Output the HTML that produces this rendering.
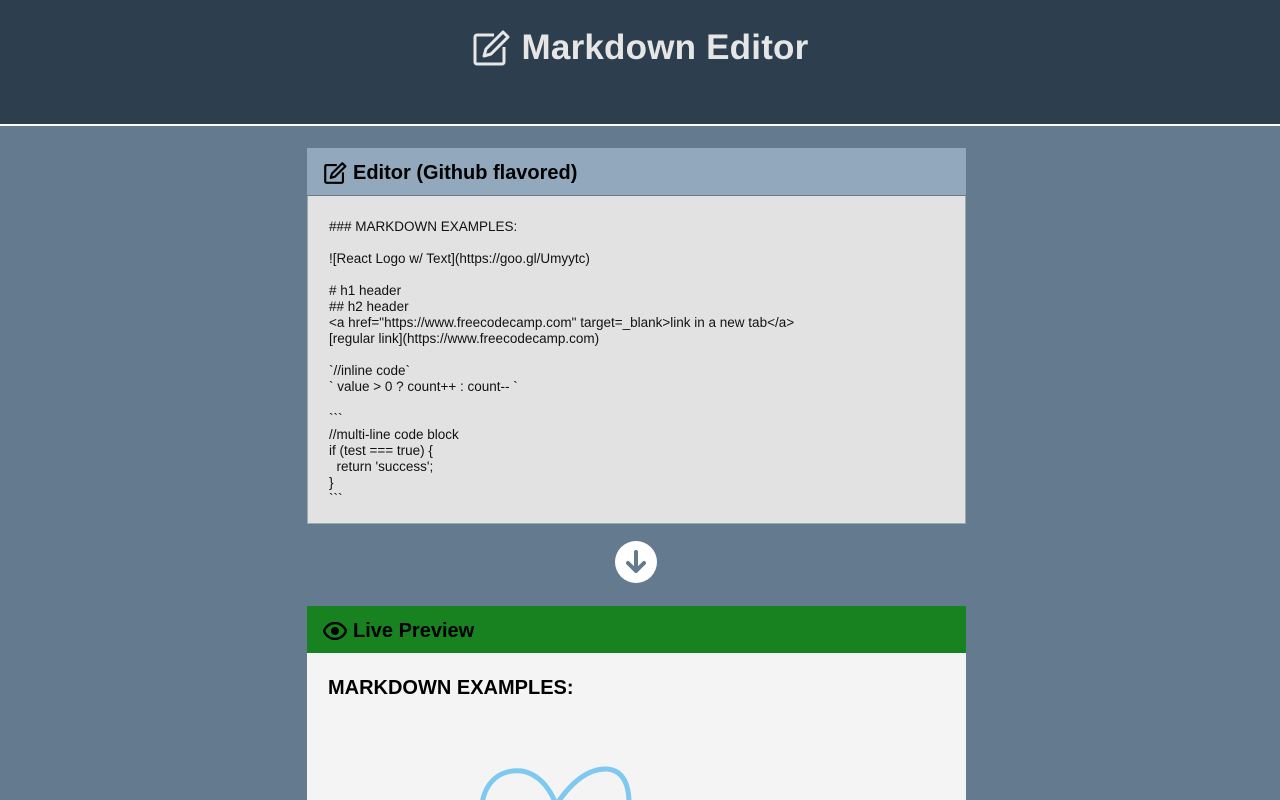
<!DOCTYPE html>
<html><head><meta charset="utf-8"><style>
*{box-sizing:border-box;margin:0;padding:0}
html{overflow:hidden;height:800px}
body{width:1280px;height:800px;overflow:hidden;background:#647a8f;font-family:"Liberation Sans",Arial,sans-serif;position:relative}
.top{background:#2d3e4e;border-bottom:2px solid #fff;height:126px;text-align:center;color:#e6e6e6}
.top h1{font-size:35px;font-weight:bold;padding-top:28px;display:flex;justify-content:center;align-items:center;gap:12px;letter-spacing:0.2px}
.box{position:absolute;left:307px;width:659px}
.ed{top:148px}
.hd{height:48px;display:flex;align-items:center;padding-left:16px;padding-top:3px;font-size:20px;font-weight:bold;gap:6px}
.ed .hd{background:#91a8bd;border-bottom:1px solid #6c7a86}
.ta{height:328px;background:#e2e2e2;border:1px solid #9aa;border-top:none;padding:23px 21px;font-size:13.5px;line-height:16px;color:#111;white-space:pre;position:relative}
.pv{top:606px}
.pv .hd{background:#17821f;height:47px}
.body{background:#f4f4f4;height:147px;padding:24px 21px;position:relative;overflow:hidden}
.body h2{font-size:20px}
.arrow{position:absolute;left:615px;top:541px;width:42px;height:42px;border-radius:50%;background:#fff}
</style></head><body>
<div class="top"><h1><svg width="38" height="36" viewBox="0 0 38 36" fill="none" stroke="#e6e6e6" stroke-width="3"><path d="M22 5H5a2 2 0 0 0-2 2v25a2 2 0 0 0 2 2h25a2 2 0 0 0 2-2V17"/><path d="M31 2l5 5-17 17-7 2 2-7z" stroke-linejoin="round"/></svg>Markdown Editor</h1></div>
<div class="box ed"><div class="hd"><svg width="24" height="22" viewBox="0 0 38 36" fill="none" stroke="#000" stroke-width="3.5"><path d="M22 5H5a2 2 0 0 0-2 2v25a2 2 0 0 0 2 2h25a2 2 0 0 0 2-2V17"/><path d="M31 2l5 5-17 17-7 2 2-7z" stroke-linejoin="round"/></svg>Editor (Github flavored)</div>
<div class="ta">### MARKDOWN EXAMPLES:

![React Logo w/ Text](https://goo.gl/Umyytc)

# h1 header
## h2 header
&lt;a href="https://www.freecodecamp.com" target=_blank&gt;link in a new tab&lt;/a&gt;
[regular link](https://www.freecodecamp.com)

&#96;//inline code&#96;
&#96; value &gt; 0 ? count++ : count-- &#96;

&#96;&#96;&#96;
//multi-line code block
if (test === true) {
  return 'success';
}
&#96;&#96;&#96;</div></div>
<div class="arrow"><svg width="42" height="42" viewBox="0 0 42 42" fill="none" stroke="#647a8f" stroke-width="4" stroke-linecap="round" stroke-linejoin="round"><path d="M21 11v19M13 22l8 8 8-8"/></svg></div>
<div class="box pv"><div class="hd"><svg width="24" height="18" viewBox="0 0 24 18"><path d="M12 1C6 1 2 6 1 9c1 3 5 8 11 8s10-5 11-8c-1-3-5-8-11-8z" fill="none" stroke="#000" stroke-width="2.4"/><circle cx="12" cy="9" r="4" fill="#000"/></svg>Live Preview</div>
<div class="body"><h2>MARKDOWN EXAMPLES:</h2>
<svg width="300" height="120" style="position:absolute;left:165px;top:110px" fill="none" stroke="#7fc8f0" stroke-width="5"><path d="M10 60C6 30 20 5 50 8C70 12 80 30 84 42C92 30 110 5 135 6C160 8 158 40 156 60"/></svg></div></div>
</body></html>
